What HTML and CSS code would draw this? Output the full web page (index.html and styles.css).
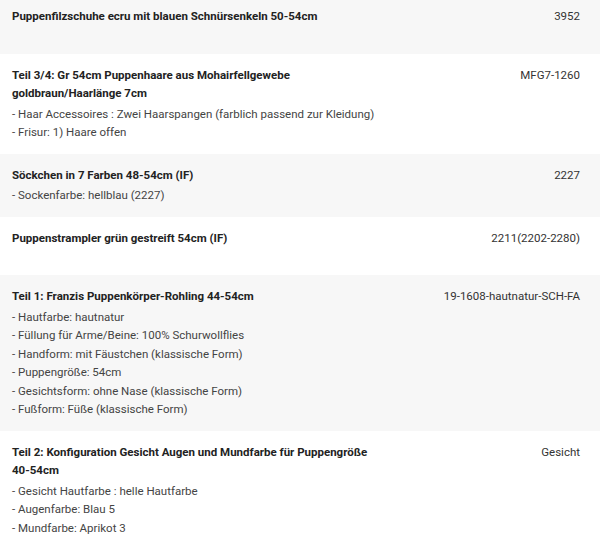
FILE: index.html
```html
<!DOCTYPE html>
<html lang="de">
<head>
<meta charset="utf-8">
<link rel="stylesheet" href="styles.css">
</head>
<body>
<div class="items">
  <div class="row alt first">
    <div class="main">
      <div class="title">Puppenfilzschuhe ecru mit blauen Schnürsenkeln 50-54cm</div>
      <div class="details empty"></div>
    </div>
    <div class="sku">3952</div>
  </div>
  <div class="row">
    <div class="main">
      <div class="title">Teil 3/4: Gr 54cm Puppenhaare aus Mohairfellgewebe goldbraun/Haarlänge 7cm</div>
      <div class="details">
        <div>- Haar Accessoires : Zwei Haarspangen (farblich passend zur Kleidung)</div>
        <div>- Frisur: 1) Haare offen</div>
      </div>
    </div>
    <div class="sku">MFG7-1260</div>
  </div>
  <div class="row alt">
    <div class="main">
      <div class="title">Söckchen in 7 Farben 48-54cm (IF)</div>
      <div class="details">
        <div>- Sockenfarbe: hellblau (2227)</div>
      </div>
    </div>
    <div class="sku">2227</div>
  </div>
  <div class="row">
    <div class="main">
      <div class="title">Puppenstrampler grün gestreift 54cm (IF)</div>
      <div class="details empty"></div>
    </div>
    <div class="sku">2211(2202-2280)</div>
  </div>
  <div class="row alt">
    <div class="main">
      <div class="title">Teil 1: Franzis Puppenkörper-Rohling 44-54cm</div>
      <div class="details">
        <div>- Hautfarbe: hautnatur</div>
        <div>- Füllung für Arme/Beine: 100% Schurwollflies</div>
        <div>- Handform: mit Fäustchen (klassische Form)</div>
        <div>- Puppengröße: 54cm</div>
        <div>- Gesichtsform: ohne Nase (klassische Form)</div>
        <div>- Fußform: Füße (klassische Form)</div>
      </div>
    </div>
    <div class="sku">19-1608-hautnatur-SCH-FA</div>
  </div>
  <div class="row">
    <div class="main">
      <div class="title">Teil 2: Konfiguration Gesicht Augen und Mundfarbe für Puppengröße 40-54cm</div>
      <div class="details">
        <div>- Gesicht Hautfarbe : helle Hautfarbe</div>
        <div>- Augenfarbe: Blau 5</div>
        <div>- Mundfarbe: Aprikot 3</div>
      </div>
    </div>
    <div class="sku">Gesicht</div>
  </div>
</div>
</body>
</html>
```
FILE: styles.css
```css
html, body {
  margin: 0;
  padding: 0;
  background: #ffffff;
}
body {
  font-family: Roboto, "Liberation Sans", sans-serif;
  font-size: 11.5px;
  color: #333333;
  overflow: hidden;
}
.items {
  display: flex;
  flex-direction: column;
  margin-top: -5px;
}
.row {
  display: grid;
  grid-template-columns: 368px 1fr;
  column-gap: 8px;
  padding: 12px 20px 12px 12px;
  line-height: 18.5px;
}
.row.alt {
  background: #f7f7f7;
}
.title {
  font-weight: 700;
  color: #222222;
  margin-bottom: 2px;
}
.details {
  color: #444444;
}
.details.empty {
  height: 14px;
}
.sku {
  text-align: right;
  color: #333333;
}
```
